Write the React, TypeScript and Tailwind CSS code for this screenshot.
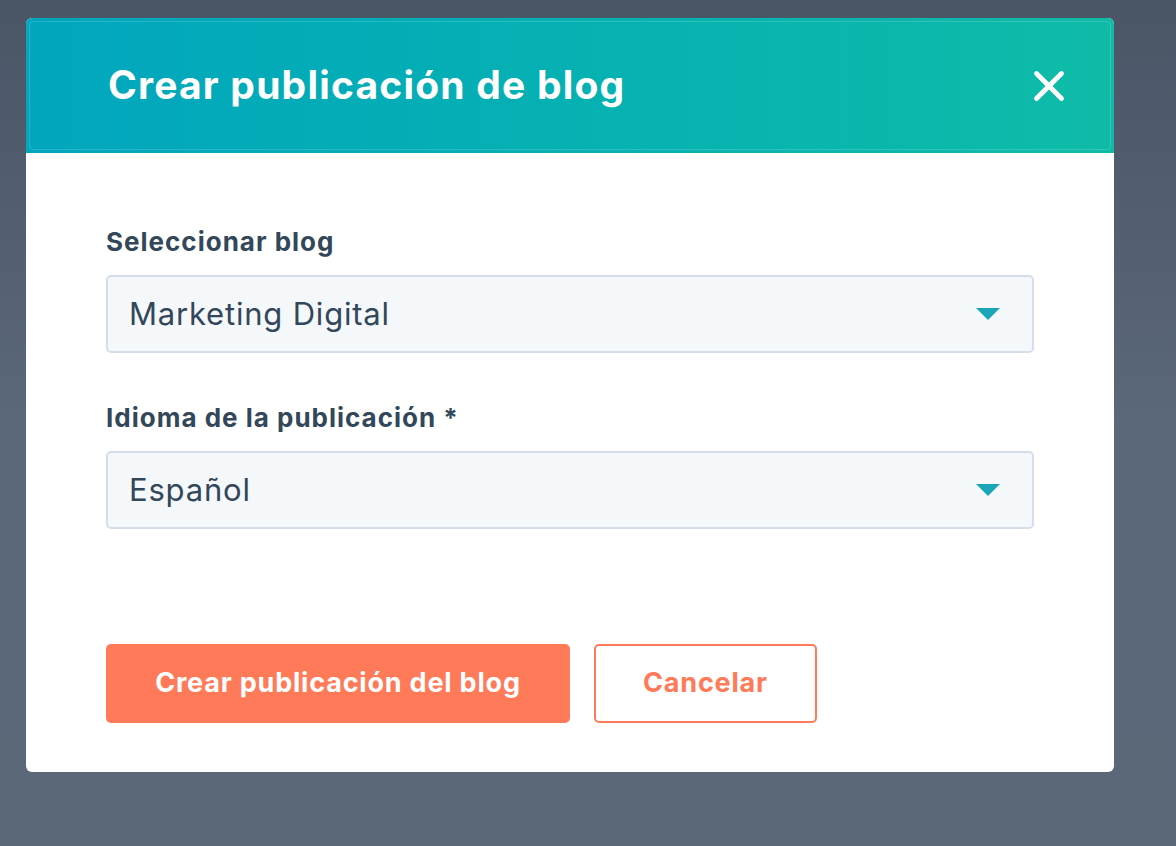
import { X } from "lucide-react";

function Caret() {
  return (
    <svg width="24" height="12" viewBox="0 0 24 12" className="shrink-0">
      <path d="M0 0 H24 L12 12 Z" fill="#1aa5b9" />
    </svg>
  );
}

function SelectField({ label, value }: { label: string; value: string }) {
  return (
    <div className="flex flex-col">
      <label className="text-[26px] leading-[32px] font-bold tracking-[1px] text-[#33475b] mb-[17px]">{label}</label>
      <div className="h-[78px] rounded-[5px] border-2 border-[#d5dee8] bg-[#f5f8fa] flex items-center justify-between pl-[21px] pr-[32px]">
        <span className="text-[31px] tracking-[0.8px] text-[#33475b]">{value}</span>
        <Caret />
      </div>
    </div>
  );
}

export default function App() {
  return (
    <div
      className="w-full h-[846px] overflow-hidden bg-gradient-to-b from-[#4a5566] via-[#5b6879] to-[#5a6878] pt-[18px] pl-[26px]"
      style={{ fontFamily: "Inter, 'Noto Sans', sans-serif" }}
    >
      <div className="w-[1088px] h-[754px] bg-white rounded-[6px] overflow-hidden flex flex-col">
        {/* Header */}
        <div className="h-[135px] shrink-0 bg-gradient-to-r from-[#02a6bd] to-[#0fbba7] p-[3px]">
          <div className="h-full border border-white/15 rounded-[4px] flex items-center justify-between pl-[78px] pr-[36px]">
            <h1 className="text-[39px] font-bold tracking-[1.2px] text-white">Crear publicación de blog</h1>
            <X size={50} strokeWidth={2.3} color="white" />
          </div>
        </div>

        {/* Body */}
        <div className="flex-1 flex flex-col px-[80px] pt-[73px] pb-[49px]">
          <SelectField label="Seleccionar blog" value="Marketing Digital" />
          <div className="h-[49px]" />
          <SelectField label="Idioma de la publicación *" value="Español" />

          <div className="flex gap-[24px] mt-auto">
            <button className="h-[79px] w-[464px] rounded-[5px] bg-[#ff7a59] text-white text-[27px] tracking-[0.8px] font-bold">
              Crear publicación del blog
            </button>
            <button className="h-[79px] w-[223px] rounded-[5px] border-2 border-[#ff7a59] bg-white text-[#ff7a59] text-[27px] tracking-[0.8px] font-bold">
              Cancelar
            </button>
          </div>
        </div>
      </div>
    </div>
  );
}
